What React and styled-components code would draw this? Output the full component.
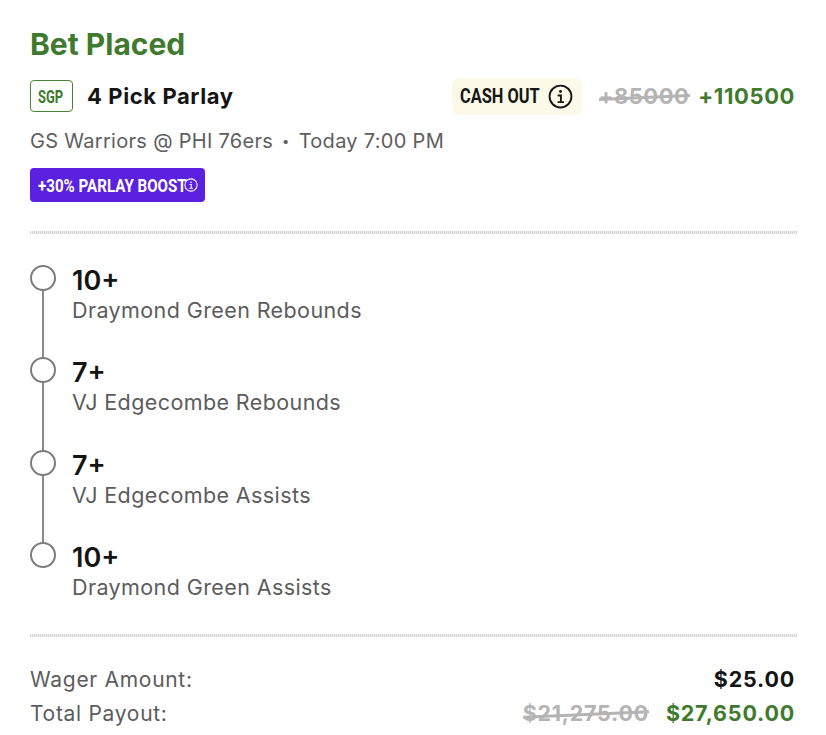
import React from "react";
import styled, { createGlobalStyle } from "styled-components";

const GlobalStyle = createGlobalStyle`
  html, body {
    margin: 0;
    padding: 0;
    background: #ffffff;
    overflow: hidden;
  }
  body {
    font-family: Inter, "Liberation Sans", sans-serif;
    -webkit-font-smoothing: antialiased;
  }
`;

const Page = styled.div`
  width: 826px;
  height: 735px;
  box-sizing: border-box;
  padding: 27px 30px 0 30px;
  overflow: hidden;
`;

const Title = styled.h1`
  margin: 0;
  font-size: 30px;
  line-height: 34px;
  font-weight: 700;
  color: #3f7a2e;
`;

const ParlayRow = styled.div`
  display: flex;
  align-items: center;
  margin-top: 16px;
  height: 38px;
  padding-right: 1px;
`;

// squeezed text, there is no condensed family installed
const Condensed = styled.span`
  display: inline-block;
  flex: none;
  width: ${(p) => p.$width}px;
  font-family: Roboto, "Liberation Sans", sans-serif;
  font-weight: 700;
  white-space: nowrap;
  transform: scaleX(${(p) => p.$scale});
  transform-origin: left center;
`;

const SgpBadge = styled.span`
  box-sizing: border-box;
  width: 43px;
  height: 32px;
  padding-left: 7px;
  border: 1.5px solid #4b8138;
  border-radius: 4px;
  display: flex;
  align-items: center;
  font-size: 18px;
  color: #3f7a2e;
`;

const ParlayName = styled.span`
  margin-left: 14px;
  font-size: 22px;
  font-weight: 700;
  letter-spacing: 0.6px;
  color: #151515;
`;

const CashOut = styled.div`
  margin-left: auto;
  box-sizing: border-box;
  width: 130px;
  height: 37px;
  padding-left: 8px;
  display: flex;
  align-items: center;
  gap: 9px;
  border-radius: 7px;
  background: #fdf9e8;
  font-size: 21px;
  color: #161616;
`;

const Struck = styled.span`
  position: relative;
  color: #b4b4b4;
  font-weight: 700;
  white-space: nowrap;

  &::after {
    content: "";
    position: absolute;
    left: 0;
    right: 0;
    top: 50%;
    height: 3px;
    background: #b4b4b4;
    transform: rotate(-2.5deg);
  }
`;

const OldOdds = styled(Struck)`
  margin-left: 17px;
  font-size: 22px;
  letter-spacing: 0.5px;
`;

const NewOdds = styled.span`
  margin-left: 9px;
  font-size: 22px;
  font-weight: 700;
  letter-spacing: 0.6px;
  color: #3f7a2e;
`;

const GameInfo = styled.div`
  margin-top: 13px;
  font-size: 20px;
  line-height: 26px;
  letter-spacing: 0.3px;
  color: #5e5e5e;
`;

const Sep = styled.span`
  font-size: 13px;
  margin: 0 3px;
  vertical-align: 2px;
`;

const BoostBadge = styled.div`
  margin-top: 14px;
  box-sizing: border-box;
  width: 175px;
  height: 34px;
  padding-left: 8px;
  display: flex;
  align-items: center;
  gap: 6px;
  border-radius: 4px;
  background: #5b21e0;
  font-size: 18px;
  color: #ffffff;
`;

const Divider = styled.div`
  height: 3px;
  width: 767px;
  background-image: repeating-linear-gradient(
    to right,
    #d2d2d2 0,
    #d2d2d2 1px,
    #f2f2f2 1px,
    #f2f2f2 2px
  );
`;

const TopDivider = styled(Divider)`
  margin-top: 29px;
`;

const Legs = styled.div`
  margin-top: 31px;
  height: 369px;
`;

const Leg = styled.div`
  display: flex;
  height: 92.4px;
`;

const Rail = styled.div`
  width: 26px;
  flex: none;
  display: flex;
  flex-direction: column;
  align-items: center;
`;

const Dot = styled.span`
  box-sizing: border-box;
  flex: none;
  width: 26px;
  height: 26px;
  border: 2px solid #7c7c7c;
  border-radius: 50%;
  background: #ffffff;
`;

const RailLine = styled.span`
  flex: 1;
  width: 2px;
  background: ${(p) => (p.$hidden ? "transparent" : "#8a8a8a")};
`;

const LegText = styled.div`
  margin-left: 16px;
`;

const LegValue = styled.div`
  font-size: 27px;
  line-height: 32px;
  font-weight: 600;
  color: #151515;
`;

const LegName = styled.div`
  font-size: 21.5px;
  line-height: 27px;
  letter-spacing: 0.4px;
  color: #5c5c5c;
`;

const Summary = styled.div`
  margin-top: 29px;
  padding-right: 1px;
  display: flex;
  flex-direction: column;
  gap: 8px;
`;

const SummaryRow = styled.div`
  display: flex;
  align-items: center;
  height: 26px;
  font-size: 21px;
`;

const SummaryLabel = styled.span`
  letter-spacing: 0.7px;
  color: #5c5c5c;
`;

const Amount = styled.span`
  margin-left: auto;
  font-size: 21.5px;
  font-weight: 700;
  letter-spacing: 0.8px;
  color: #151515;
`;

const OldAmount = styled(Struck)`
  margin-left: auto;
  font-size: 21.5px;
  letter-spacing: 0.75px;
`;

const NewAmount = styled(Amount)`
  margin-left: 17px;
  color: #3f7a2e;
`;

const InfoIcon = ({ size, color, strokeWidth }) => (
  <svg width={size} height={size} viewBox="0 0 24 24" fill="none">
    <circle cx="12" cy="12" r="10.5" stroke={color} strokeWidth={strokeWidth} />
    <circle cx="12" cy="7.2" r="1.4" fill={color} />
    <path
      d="M10 11h2.4v6M10 17.4h4.6"
      stroke={color}
      strokeWidth={strokeWidth}
      strokeLinecap="round"
    />
  </svg>
);

const legs = [
  { value: "10+", name: "Draymond Green Rebounds" },
  { value: "7+", name: "VJ Edgecombe Rebounds" },
  { value: "7+", name: "VJ Edgecombe Assists" },
  { value: "10+", name: "Draymond Green Assists" },
];

const App = () => {
  return (
    <Page>
      <GlobalStyle />
      <Title>Bet Placed</Title>
      <ParlayRow>
        <SgpBadge>
          <Condensed $width={26} $scale={0.72}>SGP</Condensed>
        </SgpBadge>
        <ParlayName>4 Pick Parlay</ParlayName>
        <CashOut>
          <Condensed $width={79} $scale={0.78}>CASH OUT</Condensed>
          <InfoIcon size={25} color="#161616" strokeWidth={1.8} />
        </CashOut>
        <OldOdds>+85000</OldOdds>
        <NewOdds>+110500</NewOdds>
      </ParlayRow>
      <GameInfo>
        GS Warriors @ PHI 76ers <Sep>•</Sep> Today 7:00 PM
      </GameInfo>
      <BoostBadge>
        <Condensed $width={140} $scale={0.84}>+30% PARLAY BOOST</Condensed>
        <InfoIcon size={14} color="#ffffff" strokeWidth={1.8} />
      </BoostBadge>
      <TopDivider />
      <Legs>
        {legs.map((leg, i) => (
          <Leg key={i}>
            <Rail>
              <Dot />
              <RailLine $hidden={i === legs.length - 1} />
            </Rail>
            <LegText>
              <LegValue>{leg.value}</LegValue>
              <LegName>{leg.name}</LegName>
            </LegText>
          </Leg>
        ))}
      </Legs>
      <Divider />
      <Summary>
        <SummaryRow>
          <SummaryLabel>Wager Amount:</SummaryLabel>
          <Amount>$25.00</Amount>
        </SummaryRow>
        <SummaryRow>
          <SummaryLabel>Total Payout:</SummaryLabel>
          <OldAmount>$21,275.00</OldAmount>
          <NewAmount>$27,650.00</NewAmount>
        </SummaryRow>
      </Summary>
    </Page>
  );
};

export default App;
